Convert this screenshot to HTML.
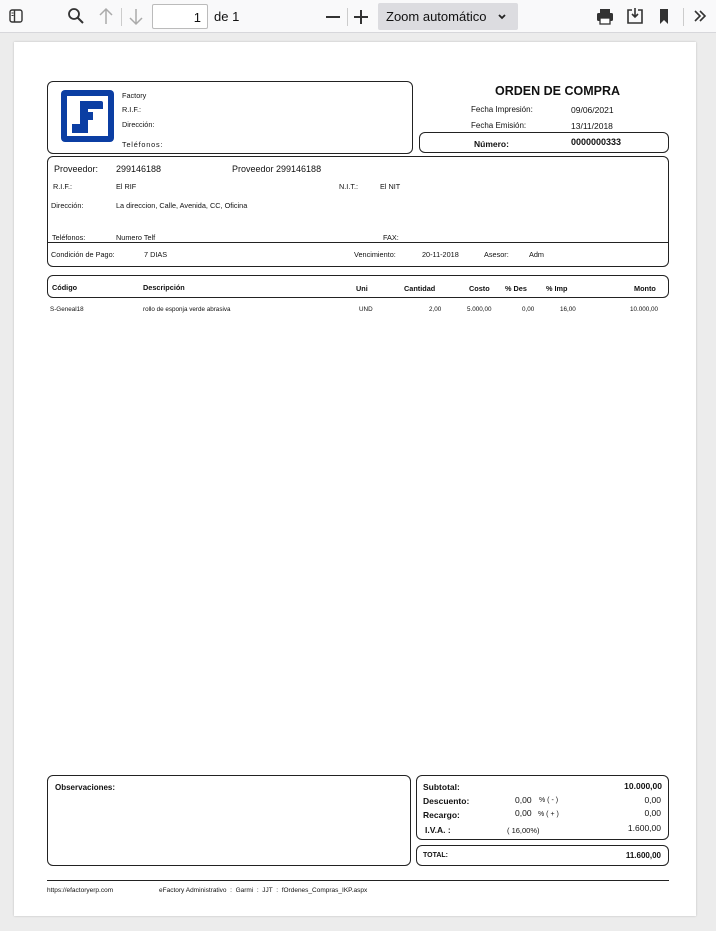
<!DOCTYPE html>
<html><head><meta charset="utf-8"><style>
*{margin:0;padding:0;box-sizing:border-box}
body{width:716px;height:931px;background:#ececec;font-family:"Liberation Sans",Tahoma,sans-serif;position:relative;overflow:hidden;color:#111}
.tb{position:absolute;left:0;top:0;width:716px;height:33px;background:#f9f9fa;border-bottom:1px solid #d7d7db}
.a{position:absolute;white-space:nowrap}
.page{position:absolute;left:14px;top:42px;width:682px;height:874px;background:#fff;box-shadow:0 0 2px rgba(0,0,0,.2)}
.box{position:absolute;border:1px solid #222;border-radius:6px}
.s{font-size:7.3px}
.m{font-size:9px}
.b{font-weight:bold}
</style></head><body>
<div class="tb">
<svg class="a" style="left:9px;top:9px" width="14" height="14" viewBox="0 0 14 14"><rect x="1" y="1" width="12" height="12" rx="2" fill="none" stroke="#333" stroke-width="1.4"/><line x1="5.5" y1="1" x2="5.5" y2="13" stroke="#333" stroke-width="1.4"/><line x1="2.5" y1="4" x2="4.5" y2="4" stroke="#333"/><line x1="2.5" y1="6.5" x2="4.5" y2="6.5" stroke="#333"/></svg>
<svg class="a" style="left:67px;top:7px" width="18" height="18" viewBox="0 0 18 18"><circle cx="7" cy="7" r="5" fill="none" stroke="#333" stroke-width="1.8"/><line x1="10.5" y1="10.5" x2="16" y2="16" stroke="#333" stroke-width="2"/></svg>
<svg class="a" style="left:98px;top:7px" width="16" height="18" viewBox="0 0 16 18"><path d="M8 2V17M2 8L8 2L14 8" fill="none" stroke="#aaa" stroke-width="1.5"/></svg>
<div class="a" style="left:121px;top:8px;width:1px;height:18px;background:#ccc"></div>
<svg class="a" style="left:128px;top:8px" width="16" height="18" viewBox="0 0 16 18"><path d="M8 1V16M2 10L8 16L14 10" fill="none" stroke="#aaa" stroke-width="1.5"/></svg>
<div class="a" style="left:152px;top:4px;width:56px;height:25px;border:1px solid #bbb;border-radius:2px;background:#fff;font-size:13px;text-align:right;padding:5px 6px 0 0">1</div>
<div class="a" style="left:214px;top:9px;font-size:13px">de 1</div>
<div class="a" style="left:326px;top:16px;width:14px;height:2px;background:#333"></div>
<div class="a" style="left:347px;top:8px;width:1px;height:18px;background:#ccc"></div>
<div class="a" style="left:354px;top:16px;width:14px;height:2px;background:#333"></div>
<div class="a" style="left:360px;top:10px;width:2px;height:14px;background:#333"></div>
<div class="a" style="left:378px;top:3px;width:140px;height:27px;background:#dcdce0;border-radius:2px;font-size:13px;padding:6px 0 0 8px">Zoom automático</div>
<svg class="a" style="left:497px;top:13px" width="10" height="8" viewBox="0 0 10 8"><path d="M2 2L5 5L8 2" fill="none" stroke="#222" stroke-width="1.8"/></svg>
<svg class="a" style="left:596px;top:8px" width="18" height="17" viewBox="0 0 18 17"><rect x="4" y="1" width="10" height="4" fill="#333"/><rect x="1" y="5" width="16" height="8" rx="1.5" fill="#333"/><rect x="4" y="10" width="10" height="6" fill="#fff" stroke="#333" stroke-width="1.3"/></svg>
<svg class="a" style="left:626px;top:7px" width="18" height="18" viewBox="0 0 18 18"><path d="M6 3H2V16H16V3H12M9 1V10M6 7L9 10L12 7" fill="none" stroke="#333" stroke-width="1.6"/></svg>
<svg class="a" style="left:658px;top:8px" width="12" height="17" viewBox="0 0 12 17"><path d="M2 1H10V16L6 12L2 16Z" fill="#333"/></svg>
<div class="a" style="left:683px;top:8px;width:1px;height:18px;background:#ccc"></div>
<svg class="a" style="left:693px;top:9px" width="14" height="14" viewBox="0 0 14 14"><path d="M2 2L7 7L2 12M7 2L12 7L7 12" fill="none" stroke="#333" stroke-width="1.6"/></svg>
</div>
<div class="page"></div>

<div class="box" style="left:47px;top:81px;width:366px;height:73px"></div>
<svg class="a" style="left:61px;top:90px" width="53" height="52" viewBox="0 0 53 52"><rect x="0" y="0" width="53" height="52" rx="4" fill="#0b3ea3"/><rect x="6" y="6" width="41" height="40" fill="#fff"/><path d="M19 11H40Q42 11 42 13V19H27V22H32V30H27V43H11V34H19Z" fill="#0b3ea3"/></svg>
<div class="a s" style="left:122px;top:91px">Factory</div>
<div class="a s" style="left:122px;top:105px">R.I.F.:</div>
<div class="a s" style="left:122px;top:120px">Dirección:</div>
<div class="a s" style="left:122px;top:140px;letter-spacing:.8px">Teléfonos:</div>
<div class="a b" style="left:495px;top:84px;font-size:12.5px">ORDEN DE COMPRA</div>
<div class="a" style="left:471px;top:105px;font-size:8px">Fecha Impresión:</div>
<div class="a" style="left:571px;top:105px;font-size:8.5px">09/06/2021</div>
<div class="a" style="left:471px;top:121px;font-size:8px">Fecha Emisión:</div>
<div class="a" style="left:571px;top:121px;font-size:8.5px">13/11/2018</div>
<div class="box" style="left:419px;top:132px;width:250px;height:21px"></div>
<div class="a b" style="left:474px;top:139px;font-size:8.5px">Número:</div>
<div class="a b" style="left:571px;top:137px;font-size:9px">0000000333</div>

<div class="box" style="left:47px;top:156px;width:622px;height:111px"></div>
<div class="a" style="left:47px;top:242px;width:622px;height:1px;background:#222"></div>
<div class="a m" style="left:54px;top:164px">Proveedor:</div>
<div class="a m" style="left:116px;top:164px">299146188</div>
<div class="a m" style="left:232px;top:164px">Proveedor 299146188</div>
<div class="a s" style="left:53px;top:182px">R.I.F.:</div>
<div class="a s" style="left:116px;top:182px">El RIF</div>
<div class="a s" style="left:339px;top:182px">N.I.T.:</div>
<div class="a s" style="left:380px;top:182px">El NIT</div>
<div class="a s" style="left:51px;top:201px">Dirección:</div>
<div class="a s" style="left:116px;top:201px">La direccion, Calle, Avenida, CC, Oficina</div>
<div class="a s" style="left:52px;top:233px">Teléfonos:</div>
<div class="a s" style="left:116px;top:233px">Numero Telf</div>
<div class="a s" style="left:383px;top:233px">FAX:</div>
<div class="a s" style="left:51px;top:250px">Condición de Pago:</div>
<div class="a s" style="left:144px;top:250px">7 DIAS</div>
<div class="a s" style="left:354px;top:250px">Vencimiento:</div>
<div class="a s" style="left:422px;top:250px">20-11-2018</div>
<div class="a s" style="left:484px;top:250px">Asesor:</div>
<div class="a s" style="left:529px;top:250px">Adm</div>

<div class="box" style="left:47px;top:275px;width:622px;height:23px"></div>
<div class="a s b" style="left:52px;top:283px">Código</div>
<div class="a s b" style="left:143px;top:283px">Descripción</div>
<div class="a s b" style="left:356px;top:284px">Uni</div>
<div class="a s b" style="left:404px;top:284px">Cantidad</div>
<div class="a s b" style="left:469px;top:284px">Costo</div>
<div class="a s b" style="left:505px;top:284px">% Des</div>
<div class="a s b" style="left:546px;top:284px">% Imp</div>
<div class="a s b" style="left:634px;top:284px">Monto</div>
<div class="a" style="left:50px;top:306px;font-size:6.3px">S-Geneal18</div>
<div class="a" style="left:143px;top:306px;font-size:6.3px">rollo de esponja verde abrasiva</div>
<div class="a" style="left:359px;top:306px;font-size:6.3px">UND</div>
<div class="a" style="left:429px;top:306px;font-size:6.3px">2,00</div>
<div class="a" style="left:467px;top:306px;font-size:6.3px">5.000,00</div>
<div class="a" style="left:522px;top:306px;font-size:6.3px">0,00</div>
<div class="a" style="left:560px;top:306px;font-size:6.3px">16,00</div>
<div class="a" style="left:630px;top:306px;font-size:6.3px">10.000,00</div>

<div class="box" style="left:47px;top:775px;width:364px;height:91px"></div>
<div class="a b" style="left:55px;top:783px;font-size:8px">Observaciones:</div>
<div class="box" style="left:416px;top:775px;width:253px;height:65px"></div>
<div class="box" style="left:416px;top:845px;width:253px;height:21px"></div>
<div class="a b" style="left:423px;top:782px;font-size:8.5px">Subtotal:</div>
<div class="a b" style="right:54px;top:781px;font-size:8.5px">10.000,00</div>
<div class="a b" style="left:423px;top:796px;font-size:8.5px">Descuento:</div>
<div class="a" style="left:515px;top:795px;font-size:8.5px">0,00</div>
<div class="a" style="left:539px;top:797px;font-size:7px">% ( - )</div>
<div class="a" style="right:55px;top:795px;font-size:8.5px">0,00</div>
<div class="a b" style="left:423px;top:810px;font-size:8.5px">Recargo:</div>
<div class="a" style="left:515px;top:808px;font-size:8.5px">0,00</div>
<div class="a" style="left:538px;top:811px;font-size:7px">% ( + )</div>
<div class="a" style="right:55px;top:808px;font-size:8.5px">0,00</div>
<div class="a b" style="left:425px;top:825px;font-size:8.5px">I.V.A. :</div>
<div class="a" style="left:507px;top:826px;font-size:7.5px">( 16,00%)</div>
<div class="a" style="right:55px;top:823px;font-size:8.5px">1.600,00</div>
<div class="a b" style="left:423px;top:852px;font-size:7px">TOTAL:</div>
<div class="a b" style="right:55px;top:851px;font-size:8px">11.600,00</div>

<div class="a" style="left:47px;top:880px;width:622px;height:1px;background:#222"></div>
<div class="a" style="left:47px;top:887px;font-size:6.5px">https://efactoryerp.com</div>
<div class="a" style="left:159px;top:887px;font-size:6.5px">eFactory Administrativo &nbsp;: &nbsp;Garmi &nbsp;: &nbsp;JJT &nbsp;: &nbsp;fOrdenes_Compras_IKP.aspx</div>
</body></html>
